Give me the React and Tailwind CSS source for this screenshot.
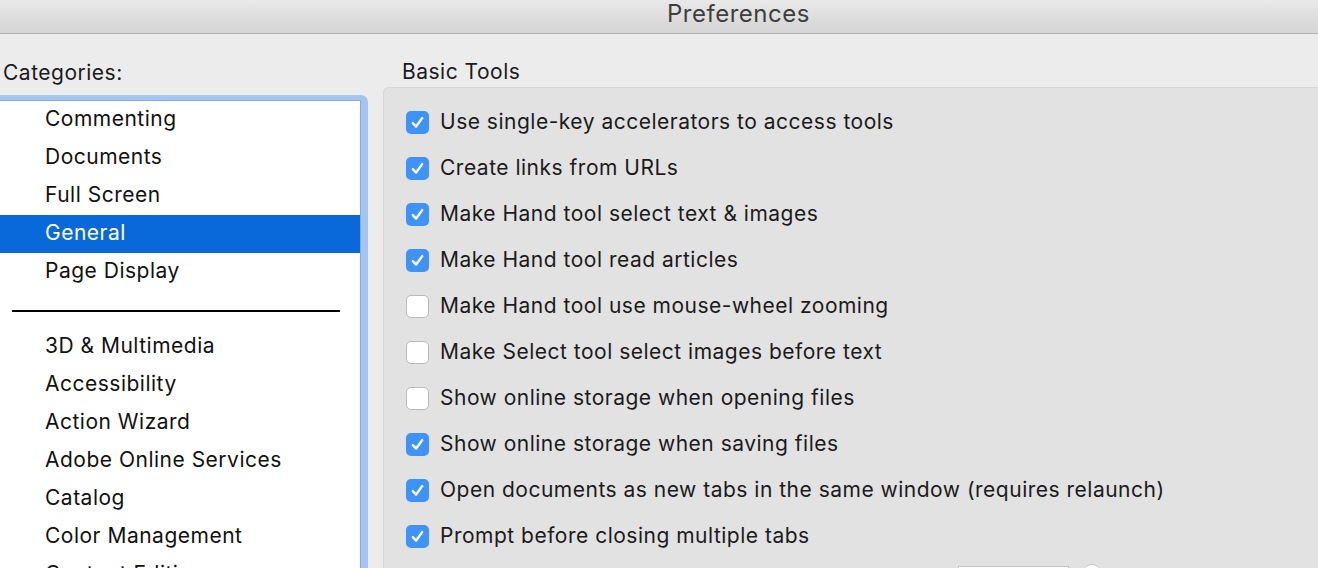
import React from 'react';

const categories = ['Commenting', 'Documents', 'Full Screen', 'General', 'Page Display'];
const moreCategories = [
    '3D & Multimedia',
    'Accessibility',
    'Action Wizard',
    'Adobe Online Services',
    'Catalog',
    'Color Management',
    'Content Editing',
];

const options = [
    { label: 'Use single-key accelerators to access tools', checked: true },
    { label: 'Create links from URLs', checked: true },
    { label: 'Make Hand tool select text & images', checked: true },
    { label: 'Make Hand tool read articles', checked: true },
    { label: 'Make Hand tool use mouse-wheel zooming', checked: false },
    { label: 'Make Select tool select images before text', checked: false },
    { label: 'Show online storage when opening files', checked: false },
    { label: 'Show online storage when saving files', checked: true },
    { label: 'Open documents as new tabs in the same window (requires relaunch)', checked: true },
    { label: 'Prompt before closing multiple tabs', checked: true },
];

// mac style checkbox
const Checkbox = ({ checked }) => (
    checked ? (
        <div className="w-[23px] h-[23px] rounded-[5px] bg-[#3d93f7] flex items-center justify-center shrink-0">
            <svg width="17" height="17" viewBox="0 0 16 16" fill="none">
                <path d="M3.6 8.6 L6.7 11.8 L12.4 3.9" stroke="white" strokeWidth="2.3" strokeLinecap="round" strokeLinejoin="round" />
            </svg>
        </div>
    ) : (
        <div className="w-[23px] h-[23px] rounded-[5px] bg-white border border-[#b9b9b9] shrink-0" />
    )
);

const CategoryItem = ({ name, selected }) => (
    <div className={`h-[38px] flex items-center pl-[45px] pb-[3px] text-[21px] tracking-[0.5px] whitespace-nowrap ${selected ? 'bg-[#0a69da] text-white' : 'text-[#111]'}`}>
        {name}
    </div>
);

export default function App() {
    return (
        <div className="w-[1318px] h-[568px] overflow-hidden bg-[#ececec] text-[#1b1b1b]" style={{ fontFamily: 'Inter, "Liberation Sans", Arial, sans-serif' }}>
            {/* title bar */}
            <div className="h-[34px] bg-gradient-to-b from-[#e9e9e9] to-[#d4d4d4] border-b border-[#b2b2b2] flex items-start pt-[1px] pl-[667px]">
                <span className="text-[24px] leading-[26px] tracking-[0.5px] text-[#3e3e3e]">Preferences</span>
            </div>

            <div className="flex">
                {/* categories column */}
                <div className="w-[368px] shrink-0 pt-[27px]">
                    <div className="h-[24px] leading-[24px] pl-[3px] text-[21px] tracking-[0.5px]">Categories:</div>
                    <div className="mt-[10px] bg-[#a2c5f2] pt-[5px] pr-[7px] rounded-tr-[7px]">
                        <div className="bg-white border-t border-r border-[#86ade3] h-[500px]">
                            {categories.map((c) => (
                                <CategoryItem key={c} name={c} selected={c === 'General'} />
                            ))}
                            <div className="h-[37px] flex items-center pl-[12px]">
                                <div className="w-[328px] h-[2px] bg-black mt-[3px]" />
                            </div>
                            {moreCategories.map((c) => (
                                <CategoryItem key={c} name={c} />
                            ))}
                        </div>
                    </div>
                </div>

                {/* basic tools panel */}
                <div className="flex-1 ml-[15px] pt-[26px]">
                    <div className="h-[24px] leading-[24px] pl-[19px] text-[21px] tracking-[0.5px]">Basic Tools</div>
                    <div className="mt-[3px] bg-[#e2e2e2] border-t border-l border-[#d6d6d6] rounded-tl-[6px] pt-[11px] pl-[22px] h-[500px]">
                        {options.map((o) => (
                            <div key={o.label} className="h-[46px] flex items-center gap-[11px]">
                                <Checkbox checked={o.checked} />
                                <span className="text-[21px] tracking-[0.5px] whitespace-nowrap">{o.label}</span>
                            </div>
                        ))}
                        <div className="h-[46px] flex items-start pt-[7px] pl-[552px] gap-[12px]">
                            <div className="w-[111px] h-[26px] bg-white border border-[#c4c4c4]" />
                            <div className="w-[22px] h-[22px] rounded-full bg-white border border-[#c4c4c4] -mt-[2px]" />
                        </div>
                    </div>
                </div>
            </div>
        </div>
    );
}
